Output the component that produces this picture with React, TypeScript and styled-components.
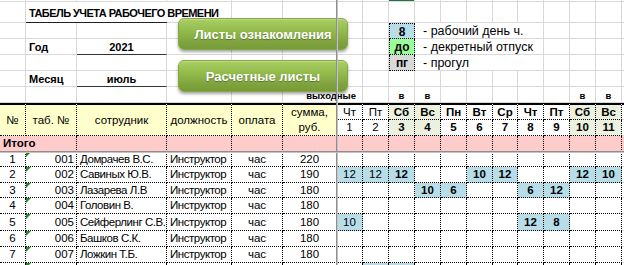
import React from "react";
import styled, { createGlobalStyle } from "styled-components";

const GRID = "#d9d9d9";
const DOT = "1px dotted #000";

const colWidths = [26, 51, 90, 65, 51, 54, 26, 26, 26, 26, 26, 26, 25, 26, 26, 26, 26, 2];
const rowHeights = [2, 21, 16, 16, 16, 16, 16, 17, 16, 16, 15, 16, 15, 16, 17, 16, 16, 16];

const days = [
  { name: "Чт", n: 1, off: false },
  { name: "Пт", n: 2, off: false },
  { name: "Сб", n: 3, off: true },
  { name: "Вс", n: 4, off: true },
  { name: "Пн", n: 5, off: false },
  { name: "Вт", n: 6, off: false },
  { name: "Ср", n: 7, off: false },
  { name: "Чт", n: 8, off: false },
  { name: "Пт", n: 9, off: false },
  { name: "Сб", n: 10, off: true },
  { name: "Вс", n: 11, off: true },
];

const staff: { no: string; tab: string; name: string; job: string; pay: string; sum: string; hours: Record<number, number | string> }[] = [
  { no: "1", tab: "001", name: "Домрачев В.С.", job: "Инструктор", pay: "час", sum: "220", hours: {} },
  { no: "2", tab: "002", name: "Савиных Ю.В.", job: "Инструктор", pay: "час", sum: "190", hours: { 1: 12, 2: 12, 3: 12, 6: 10, 7: 12, 10: 12, 11: 10 } },
  { no: "3", tab: "003", name: "Лазарева Л.В", job: "Инструктор", pay: "час", sum: "180", hours: { 4: 10, 5: 6, 8: 6, 9: 12 } },
  { no: "4", tab: "004", name: "Головин В.", job: "Инструктор", pay: "час", sum: "180", hours: {} },
  { no: "5", tab: "005", name: "Сейферлинг С.В.", job: "Инструктор", pay: "час", sum: "180", hours: { 1: 10, 8: 12, 9: 8 } },
  { no: "6", tab: "006", name: "Башков С.К.", job: "Инструктор", pay: "час", sum: "180", hours: {} },
  { no: "7", tab: "007", name: "Ложкин Т.Б.", job: "Инструктор", pay: "час", sum: "180", hours: {} },
  { no: "", tab: "", name: "", job: "", pay: "", sum: "", hours: { 2: "", 3: "" } },
];

const GlobalStyle = createGlobalStyle`
  html, body { margin: 0; padding: 0; background: #fff; }
  body {
    font-family: "Liberation Sans", Arial, sans-serif;
    font-size: 11.5px;
    color: #000;
    overflow: hidden;
  }
`;

const Page = styled.div`
  position: relative;
  width: 624px;
  height: 265px;
  overflow: hidden;
`;

const Sheet = styled.div`
  display: grid;
  grid-template-columns: ${colWidths.map((w) => `${w}px`).join(" ")};
  grid-template-rows: ${rowHeights.map((h) => `${h}px`).join(" ")};
`;

type CellProps = {
  $span?: number;
  $rows?: number;
  $bg?: string;
  $align?: "left" | "center" | "right";
  $bold?: boolean;
};

const Cell = styled.div<CellProps>`
  position: relative;
  box-sizing: border-box;
  grid-column: span ${(p) => p.$span ?? 1};
  grid-row: span ${(p) => p.$rows ?? 1};
  display: flex;
  align-items: center;
  justify-content: ${(p) =>
    p.$align === "left" ? "flex-start" : p.$align === "right" ? "flex-end" : "center"};
  padding: ${(p) => (p.$align === "left" ? "0 0 0 3px" : "0 3px")};
  background: ${(p) => p.$bg ?? "transparent"};
  border-right: 1px solid ${GRID};
  border-bottom: 1px solid ${GRID};
  font-weight: ${(p) => (p.$bold ? 700 : 400)};
  white-space: nowrap;
  overflow: hidden;
  line-height: 1;
`;

const Blank = styled(Cell)``;

const Filler = styled(Cell)<{ $head?: boolean }>`
  padding: 0;
  border-right: none;
  border-top: ${(p) => (p.$head ? "2px solid #000" : "none")};
`;

const Title = styled(Cell)`
  overflow: visible;
  font-size: 11px;
  font-weight: 700;
  letter-spacing: -0.55px;
  border-bottom: 1px solid #222;
  border-right: none;
  padding-top: 2px;
`;

const FieldLabel = styled(Cell)`
  font-size: 11px;
  font-weight: 700;
  padding-top: 2px;
`;

const FieldValue = styled(Cell)`
  font-size: 11px;
  font-weight: 700;
  border-bottom: 1px solid #333;
  padding-top: 2px;
`;

const Swatch = styled(Cell)<{ $first?: boolean }>`
  font-size: 12px;
  font-weight: 700;
  border-left: ${DOT};
  border-right: ${DOT};
  border-bottom: ${DOT};
  border-top: ${(p) => (p.$first ? DOT : "none")};
  padding-top: 1px;
`;

const Note = styled(Cell)`
  font-size: 12.5px;
  padding-left: 8px;
  padding-top: 1px;
`;

const OffMark = styled(Cell)`
  font-weight: 700;
  font-size: 9.5px;
  padding-top: 3px;
  overflow: visible;
`;

const HeadCell = styled(Cell)`
  background: #ffffcc;
  flex-direction: column;
  justify-content: center;
  align-items: center;
  text-align: center;
  line-height: 15px;
  border-top: 2px solid #000;
  border-right: ${DOT};
  border-bottom: ${DOT};
`;

const DayName = styled(Cell)<{ $off?: boolean }>`
  background: ${(p) => (p.$off ? "#ebf1de" : "#fff")};
  border-top: 2px solid #000;
  border-right: ${DOT};
  border-bottom: ${DOT};
  padding: 1px 0 0;
`;

const DayNum = styled(Cell)<{ $off?: boolean }>`
  background: ${(p) => (p.$off ? "#ebf1de" : "#fff")};
  border-right: ${DOT};
  border-bottom: ${DOT};
  padding: 1px 0 0;
`;

const TotalCell = styled(Cell)`
  background: #ffcccc;
  border-right: ${DOT};
  border-bottom: 1px solid #999;
  padding-top: 1px;
`;

const DataCell = styled(Cell)`
  border-right: ${DOT};
  border-bottom: ${DOT};
  padding-top: 1px;
  letter-spacing: ${(p) => (p.$align === "left" ? "-0.45px" : "0")};
`;

const TabCell = styled(DataCell)`
  justify-content: flex-end;
  padding-right: 2px;

  &::before {
    content: "";
    position: absolute;
    left: 0;
    top: 0;
    border-top: 5px solid #1e8a24;
    border-right: 5px solid transparent;
  }
`;

const HoursCell = styled(DataCell)`
  padding: 1px 0 0;
`;

const ActionButton = styled.div<{ $top: number }>`
  position: absolute;
  left: 178px;
  top: ${(p) => p.$top}px;
  width: 170px;
  height: 32px;
  box-sizing: border-box;
  border-radius: 6px;
  border: 1px solid #86a843;
  background: linear-gradient(#a9cf62 0%, #93bb4c 40%, #80a53f 75%, #759a37 100%);
  box-shadow: 0 2px 3px rgba(0, 0, 0, 0.35), inset 0 1px 0 rgba(255, 255, 255, 0.25);
  display: flex;
  align-items: center;
  justify-content: center;
  color: #fff;
  font-family: "Liberation Sans", Arial, sans-serif;
  font-size: 13px;
  font-weight: 700;
  text-shadow: 0 1px 1px rgba(0, 0, 0, 0.35);
  z-index: 1;
`;

const FreezeV = styled.div`
  position: absolute;
  left: 336px;
  top: 0;
  bottom: 0;
  width: 1px;
  background: #8e8e8e;
  box-shadow: 1px 0 0 #c4c4c4;
  z-index: 2;
`;

const FreezeH = styled.div`
  position: absolute;
  left: 0;
  right: 0;
  top: 151px;
  height: 1px;
  background: #8e8e8e;
  box-shadow: 0 1px 0 #c4c4c4;
  z-index: 2;
`;

const blanks = (prefix: string, from: number, to: number) => {
  const out: React.ReactNode[] = [];
  for (let i = from; i <= to; i++) out.push(<Blank key={`${prefix}-${i}`} />);
  return out;
};

const legend = [
  { mark: "8", color: "#b7dee8", text: "- рабочий день ч." },
  { mark: "до", color: "#99ff99", text: "- декретный отпуск" },
  { mark: "пг", color: "#d9d9d9", text: "- прогул" },
];

const App = () => {
  return (
    <Page>
      <GlobalStyle />
      <Sheet>
        {/* row 0: sliver of the row above */}
        {colWidths.map((_, i) =>
          i === 17 ? <Filler key={`r0-${i}`} /> : <Blank key={`r0-${i}`} $bg={i === 8 ? "#217346" : undefined} />
        )}

        {/* title */}
        <Blank />
        <Title $span={2} $align="left">ТАБЕЛЬ УЧЕТА РАБОЧЕГО ВРЕМЕНИ</Title>
        {blanks("r1", 3, 16)}
        <Filler />

        {/* legend + year / month */}
        {legend.map((item, idx) => (
          <React.Fragment key={item.mark}>
            <Blank />
            {idx === 1 ? (
              <>
                <FieldLabel $align="left">Год</FieldLabel>
                <FieldValue>2021</FieldValue>
              </>
            ) : (
              blanks(`lg${idx}`, 1, 2)
            )}
            {blanks(`lg${idx}b`, 3, 7)}
            <Swatch $bg={item.color} $first={idx === 0}>
              {item.mark}
            </Swatch>
            <Note $span={5} $align="left">{item.text}</Note>
            {blanks(`lg${idx}c`, 14, 16)}
            <Filler />
          </React.Fragment>
        ))}

        <Blank />
        <FieldLabel $align="left">Месяц</FieldLabel>
        <FieldValue>июль</FieldValue>
        {blanks("r5", 3, 16)}
        <Filler />

        {/* weekend markers */}
        {blanks("r6", 0, 4)}
        <OffMark $span={2} $align="right" style={{ paddingRight: 6 }}>
          выходные
        </OffMark>
        <Blank />
        {days.slice(2).map((d) =>
          d.off ? <OffMark key={`off-${d.n}`}>в</OffMark> : <Blank key={`off-${d.n}`} />
        )}
        <Filler />

        {/* table head */}
        <HeadCell $rows={2}>№</HeadCell>
        <HeadCell $rows={2}>таб. №</HeadCell>
        <HeadCell $rows={2}>сотрудник</HeadCell>
        <HeadCell $rows={2}>должность</HeadCell>
        <HeadCell $rows={2}>оплата</HeadCell>
        <HeadCell $rows={2}>
          <span>сумма,</span>
          <span>руб.</span>
        </HeadCell>
        {days.map((d, i) => (
          <DayName key={`dn-${i}`} $off={d.off} $bold={i > 1}>
            {d.name}
          </DayName>
        ))}
        <Filler $head />
        {days.map((d, i) => (
          <DayNum key={`dd-${i}`} $off={d.off} $bold={i > 1}>
            {d.n}
          </DayNum>
        ))}
        <Filler />

        {/* totals */}
        <TotalCell $span={2} $align="left" $bold>
          Итого
        </TotalCell>
        {[2, 3, 4, 5].map((i) => (
          <TotalCell key={`tt-${i}`} />
        ))}
        {days.map((d) => (
          <TotalCell key={`td-${d.n}`} />
        ))}
        <Filler $bg="#ffcccc" />

        {/* staff rows */}
        {staff.map((s, r) => (
          <React.Fragment key={`s-${r}`}>
            <DataCell>{s.no}</DataCell>
            <TabCell>{s.tab}</TabCell>
            <DataCell $align="left">{s.name}</DataCell>
            <DataCell $align="left">{s.job}</DataCell>
            <DataCell>{s.pay}</DataCell>
            <DataCell>{s.sum}</DataCell>
            {days.map((d, i) => {
              const v = s.hours[d.n];
              return (
                <HoursCell key={`h-${r}-${d.n}`} $bg={v !== undefined ? "#b7dee8" : undefined} $bold={i > 1}>
                  {v}
                </HoursCell>
              );
            })}
            <Filler />
          </React.Fragment>
        ))}
      </Sheet>

      <ActionButton $top={18}>Листы ознакомления</ActionButton>
      <ActionButton $top={60}>Расчетные листы</ActionButton>
      <FreezeV />
      <FreezeH />
    </Page>
  );
};

export default App;
